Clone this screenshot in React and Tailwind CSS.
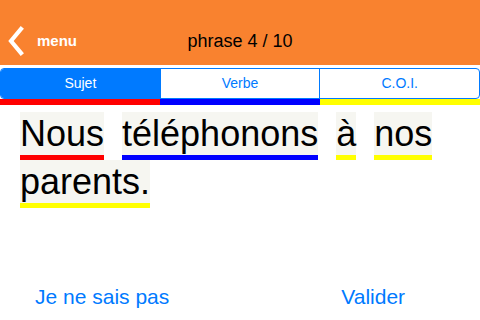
import React from 'react';

const words = [
  { text: 'Nous', bar: 'bg-[#ff0000]' },
  { text: 'téléphonons', bar: 'bg-[#0000ff]' },
  { text: 'à', bar: 'bg-[#ffff00]' },
  { text: 'nos', bar: 'bg-[#ffff00]' },
  { text: 'parents.', bar: 'bg-[#ffff00]' },
];

export default function App() {
  return (
    <div
      className="w-[480px] h-[320px] bg-white flex flex-col overflow-hidden"
      style={{ fontFamily: '"Liberation Sans", Arial, sans-serif' }}
    >
      {/* Nav bar */}
      <div className="h-[65px] pt-[17px] bg-[#f9822f] grid grid-cols-[1fr_auto_1fr] items-center shrink-0">
        <div className="flex items-center pl-[7px]">
          <svg width="17" height="30" viewBox="0 0 17 30" className="text-white">
            <path d="M14 3 L4 15 L14 27" fill="none" stroke="currentColor" strokeWidth="4.2" strokeLinecap="square" />
          </svg>
          <span className="ml-[13px] text-white font-bold text-[15px]">menu</span>
        </div>
        <div className="text-black text-[18px]">phrase 4 / 10</div>
        <div />
      </div>

      {/* Segmented control */}
      <div className="mt-[3px] h-[31px] flex border border-[#007aff] rounded-[4px] overflow-hidden shrink-0 text-[14px]">
        <div className="flex-1 bg-[#007aff] text-white flex items-center justify-center">Sujet</div>
        <div className="flex-1 border-l border-[#007aff] text-[#007aff] flex items-center justify-center">Verbe</div>
        <div className="flex-1 border-l border-[#007aff] text-[#007aff] flex items-center justify-center">C.O.I.</div>
      </div>
      <div className="flex h-[6px] shrink-0">
        <div className="flex-1 bg-[#ff0000]" />
        <div className="flex-1 bg-[#0000ff]" />
        <div className="flex-1 bg-[#ffff00]" />
      </div>

      {/* Sentence */}
      <div className="flex flex-wrap gap-x-[18px] px-[20px] pt-[7px]">
        {words.map((w, i) => (
          <div key={i} className="flex flex-col">
            <span className="bg-[#f6f6f1] text-black text-[36px] leading-[43px] h-[43px]">{w.text}</span>
            <div className={`h-[5px] ${w.bar}`} />
          </div>
        ))}
      </div>

      {/* Actions */}
      <div className="mt-auto h-[46px] flex items-center text-[#007aff] text-[21px] pb-[1px]">
        <span className="ml-[35px]">Je ne sais pas</span>
        <span className="ml-[172px]">Valider</span>
      </div>
    </div>
  );
}
